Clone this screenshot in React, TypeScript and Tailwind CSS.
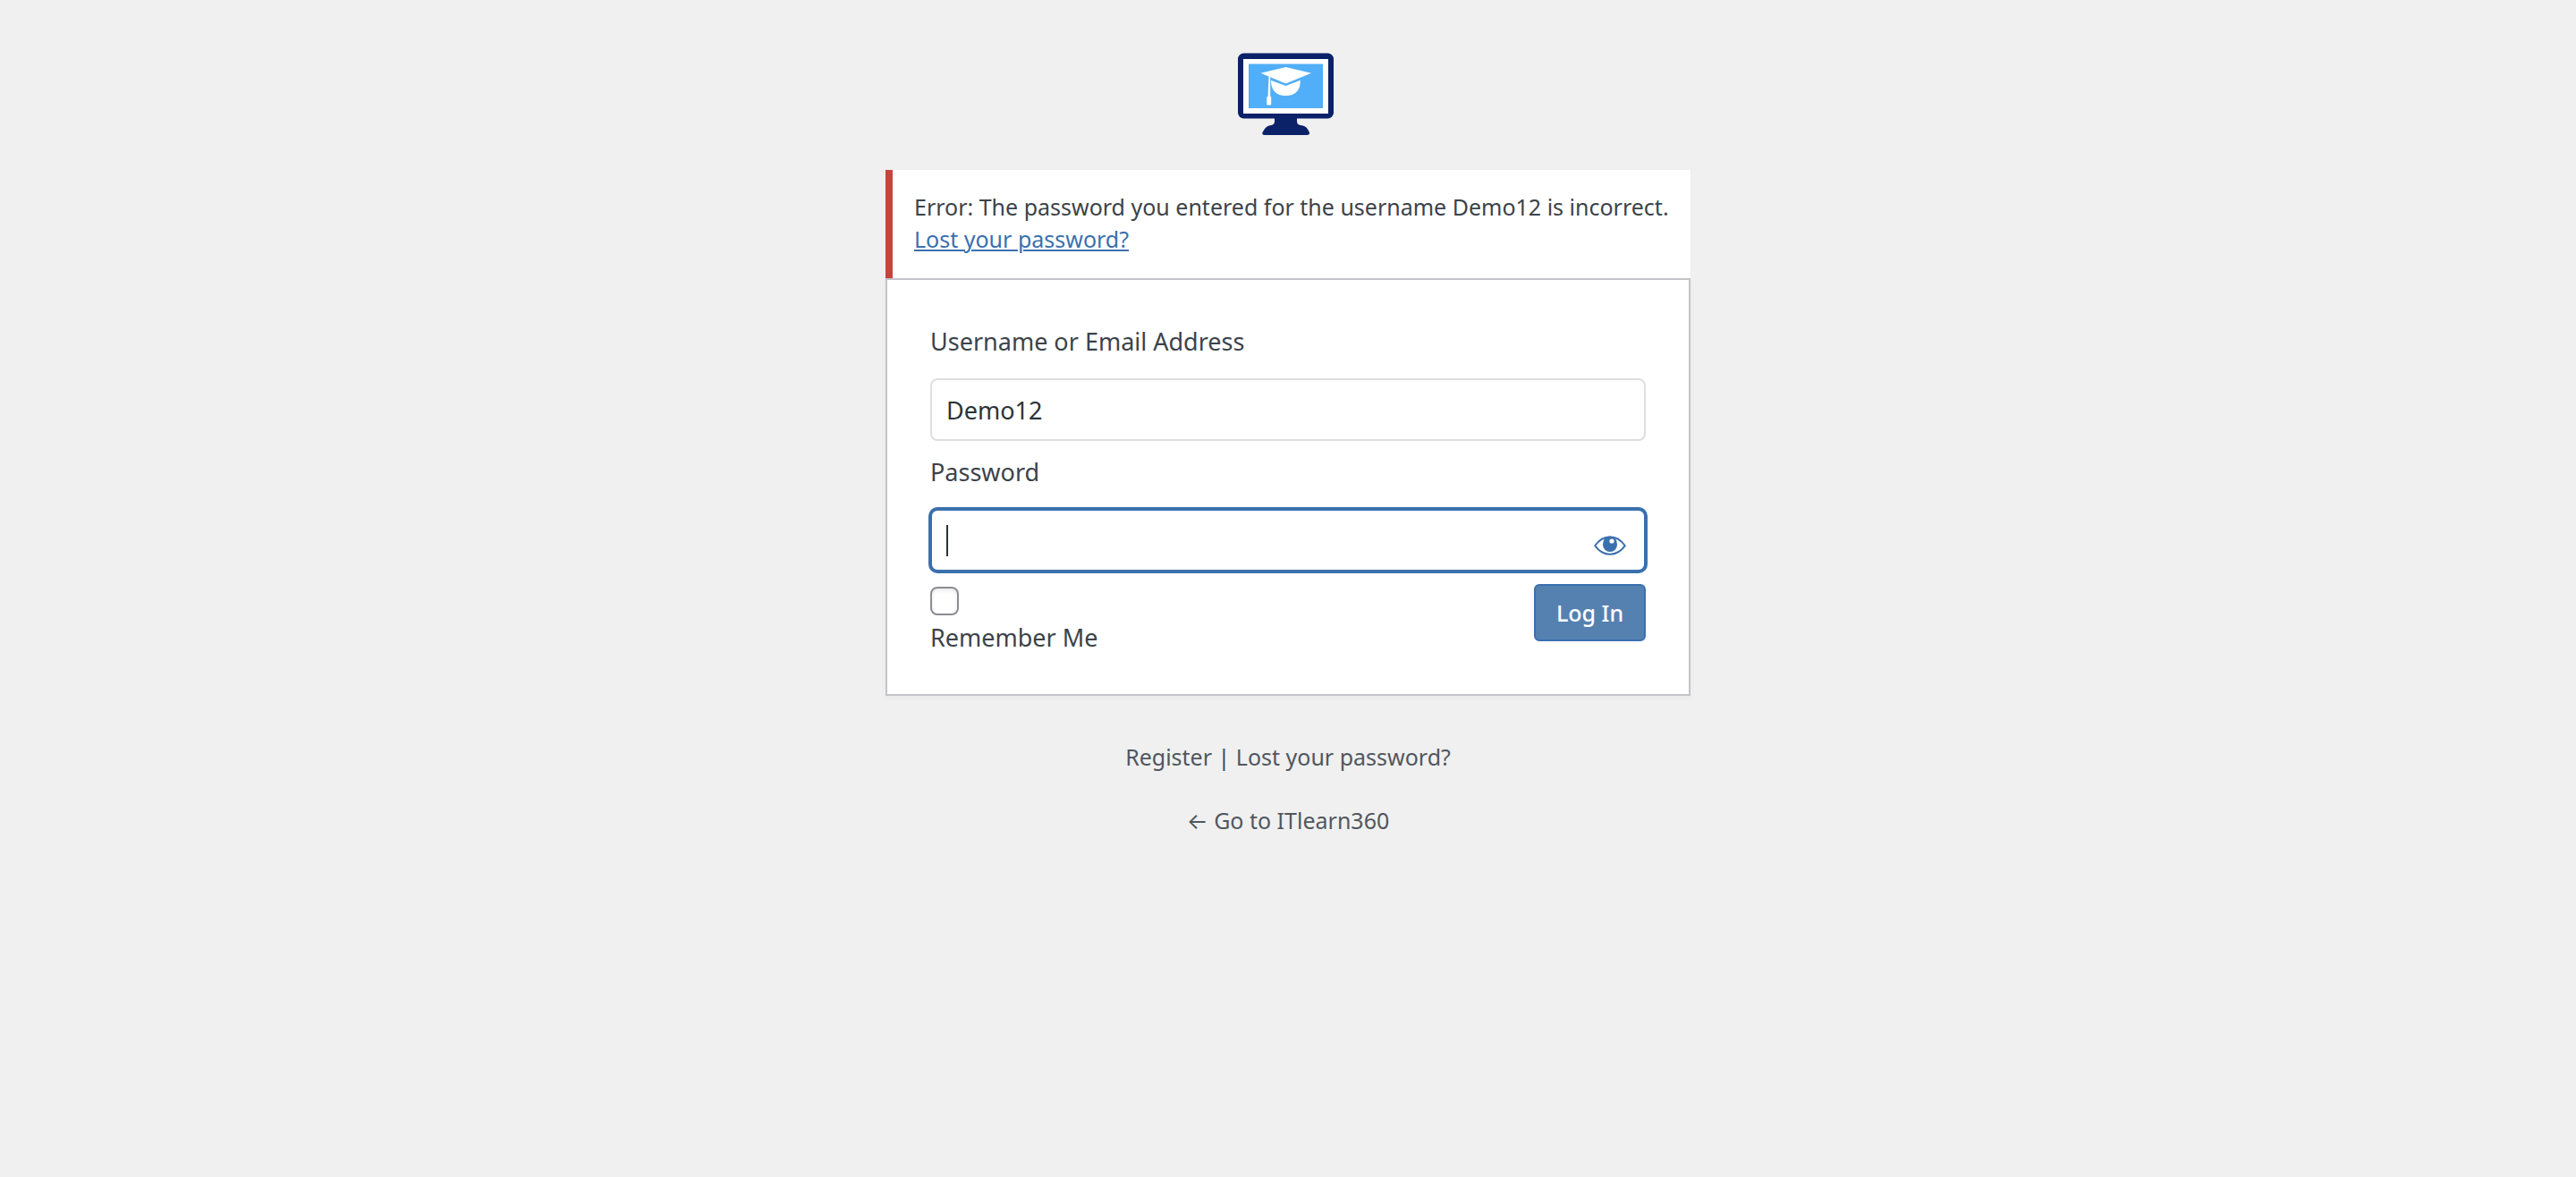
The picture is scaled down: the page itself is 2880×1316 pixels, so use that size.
import React from "react";

function Logo() {
  return (
    <svg viewBox="0 0 160 130" className="h-[130px] w-[160px]" aria-hidden="true">
      <rect x="24" y="19.5" width="107" height="73" rx="6.5" fill="#0b2168" />
      <rect x="30" y="26" width="95" height="61" fill="#fff" />
      <rect x="36" y="31.5" width="83" height="49.5" fill="#51aef8" />
      <path
        d="M65 92h25v3.5q0 4 4 4.500q6 .5 8 4.500l2 3.500q.5 3-3 3H54q-3.500 0-2.500-3l2.500-4q2.500-3.500 7-4q4-.5 4-4.500z"
        fill="#0b2168"
      />
      <path d="M49.500 41.700 77.500 35 106 41.700 77.500 53.500z" fill="#fff" />
      <path
        d="M61 49l3 1.200L77.500 55.500 91 50.200 93.700 49C94.500 61 88 67 77.500 67S60.500 61 61 49z"
        fill="#fff"
      />
      <path
        d="M59 45v24M60.500 48.500 77.500 55 94 48.500"
        fill="none"
        stroke="#51aef8"
        strokeWidth="2"
      />
      <path d="M58.500 45h1.700v23h1v8.500q0 1-1 1h-3q-1 0-1-1V69q0-1 1.300-1z" fill="#fff" />
    </svg>
  );
}

function EyeIcon() {
  return (
    <svg viewBox="0 0 36 22" className="h-[22px] w-9" aria-hidden="true">
      <path
        d="M1.200 11.200C5.500 5 11 1.200 18 1.200s12.500 3.800 16.800 10C30.500 17.200 25 20.800 18 20.800S5.500 17.200 1.200 11.200z"
        fill="#fff"
        stroke="#3b70ae"
        strokeWidth="2"
        strokeLinejoin="round"
      />
      <path d="M12 3Q10 6 10 10a8 8 0 0 0 16 0q0-4-2-7Q18 .5 12 3z" fill="#3b70ae" />
      <circle cx="20" cy="6" r="2.600" fill="#fff" />
    </svg>
  );
}

export default function App() {
  return (
    <main className="flex min-h-screen flex-col items-center bg-[#f0f0f0] pt-10 font-['Noto_Sans',sans-serif] text-[25px] leading-9 text-[#3c434a]">
      <a href="#home" aria-label="ITlearn360" className="block">
        <Logo />
      </a>

      <div className="mt-5 w-full max-w-[900px]">
        <div role="alert" className="border-l-8 border-[#c8433e] bg-white px-6 pt-[23px] pb-[26px] shadow-[0_2px_2px_rgba(0,0,0,0.04)]">
          <p>
            Error: The password you entered for the username Demo12 is incorrect.
            <br />
            <a href="#lost" className="text-[#3b70ae] underline decoration-2 underline-offset-2">
              Lost your password?
            </a>
          </p>
        </div>

        <form
          className="flex flex-col border-2 border-[#c3c4c9] bg-white px-12 pt-[51px] pb-[45px] text-[27px] shadow-[0_2px_6px_rgba(0,0,0,0.04)]"
          onSubmit={(e) => e.preventDefault()}
        >
          <label htmlFor="user">Username or Email Address</label>
          <input
            id="user"
            type="text"
            defaultValue="Demo12"
            className="mt-[23px] h-[70px] w-full rounded-lg border-2 border-[#dedee0] bg-white px-4 text-[#2c3338] outline-none"
          />

          <label htmlFor="pass" className="mt-[17px]">
            Password
          </label>
          <div className="relative mt-[23px] h-[70px]">
            <input
              id="pass"
              type="password"
              className="h-full w-full rounded-lg border-2 border-[#3b70ae] bg-white px-4 text-[#2c3338] caret-transparent ring-2 ring-[#3b70ae] outline-none"
            />
            <span className="absolute top-[18px] left-[18px] h-[35px] w-0.5 bg-[#2c3338]" />
            <button
              type="button"
              aria-label="Show password"
              className="absolute inset-y-0 right-0 flex w-20 items-center justify-center pt-[11px]"
            >
              <EyeIcon />
            </button>
          </div>

          <div className="mt-[14px] flex items-start justify-between">
            <div className="flex flex-col gap-[7px] pt-[3px]">
              <input
                id="remember"
                type="checkbox"
                className="size-8 appearance-none rounded-lg border-2 border-[#8c8c94] bg-white shadow-[inset_0_2px_4px_rgba(0,0,0,0.1)]"
              />
              <label htmlFor="remember">Remember Me</label>
            </div>
            <button
              type="submit"
              className="h-16 w-[125px] rounded-md border-2 border-[#3b70ae] bg-[#5581b1] text-[25px] font-medium text-white"
            >
              Log In
            </button>
          </div>
        </form>
      </div>

      <nav className="mt-[50px] text-center text-[#50575e]">
        <a href="#register">Register</a>
        <span className="text-[#3c434a]"> | </span>
        <a href="#lost">Lost your password?</a>
      </nav>
      <a href="#home" className="mt-[35px] text-[#50575e]">
        <span className="font-['Inter',sans-serif]">←</span> Go to ITlearn360
      </a>
    </main>
  );
}
